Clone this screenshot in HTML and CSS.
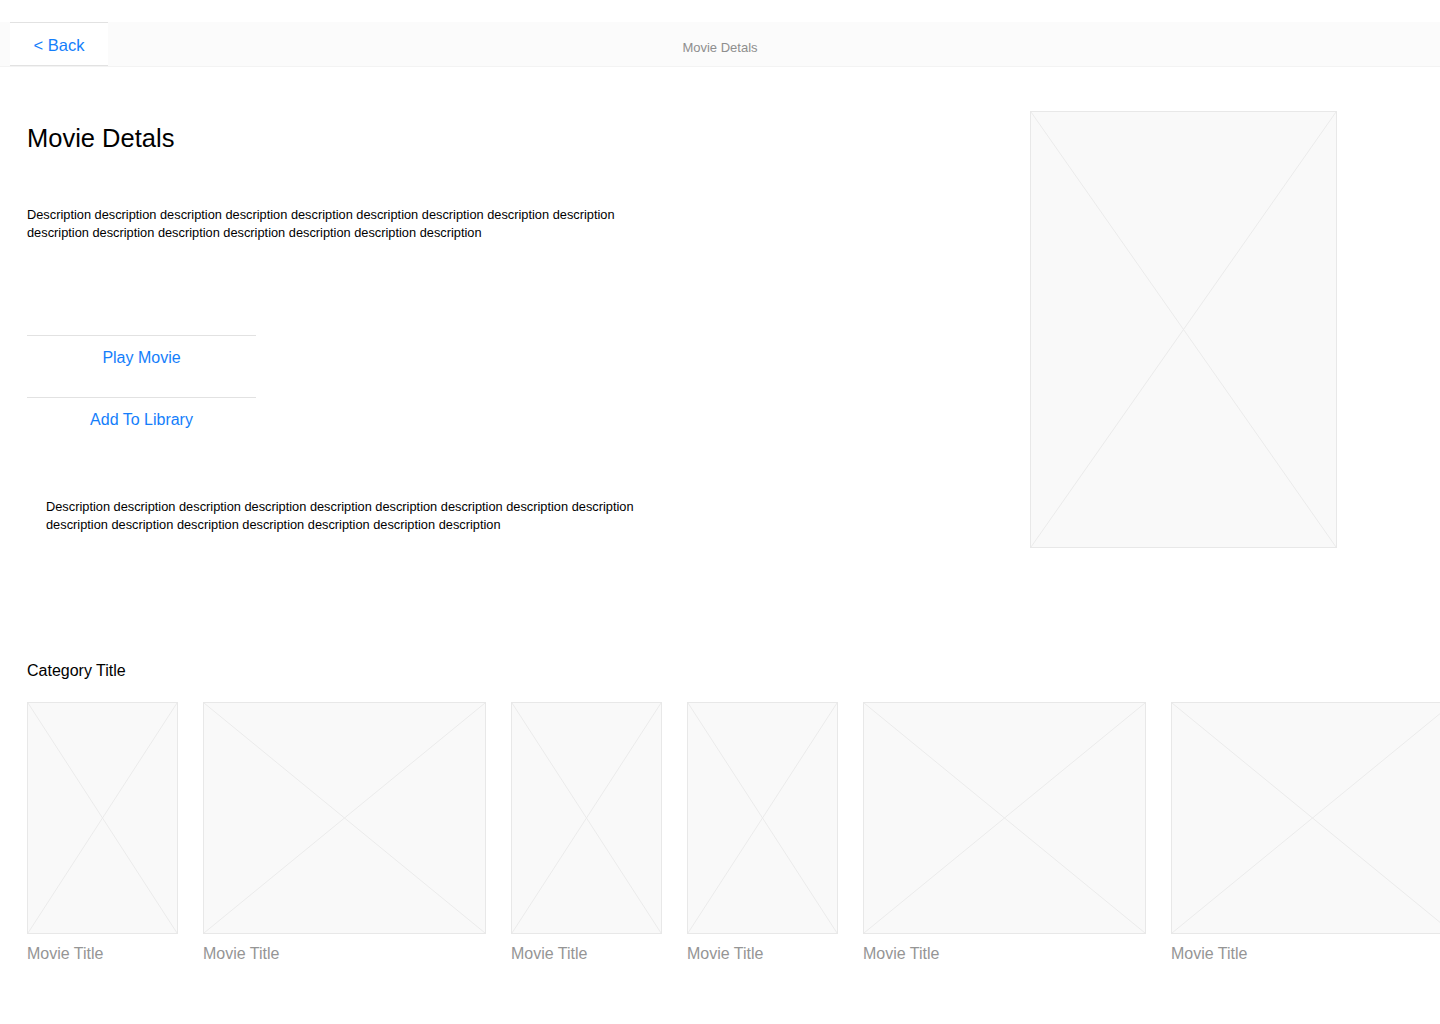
FILE: index.html
```html
<!DOCTYPE html>
<html lang="en">
<head>
    <meta charset="UTF-8">
    <meta name="viewport" content="width=device-width, initial-scale=1.0">
    <title>Movie Detals</title>
    <link rel="stylesheet" href="styles.css">
</head>
<body>

<div class="navbar">
    <a href="#" class="back">&lt; Back</a>
    <div class="nav-title">Movie Detals</div>
</div>

<div class="details">
    <div class="info">
        <h1>Movie Detals</h1>
        <p class="description">Description description description description description description description description description description description description description description description description</p>

        <div class="actions">
            <a href="#" class="action">Play Movie</a>
            <a href="#" class="action">Add To Library</a>
        </div>

        <p class="description indented">Description description description description description description description description description description description description description description description description</p>
    </div>

    <div class="placeholder poster">
        <svg viewBox="0 0 100 100" preserveAspectRatio="none"><line x1="0" y1="0" x2="100" y2="100"/><line x1="100" y1="0" x2="0" y2="100"/></svg>
    </div>
</div>

<div class="category">
    <h2>Category Title</h2>
    <div class="row">
        <div class="card">
            <div class="placeholder thumb">
                <svg viewBox="0 0 100 100" preserveAspectRatio="none"><line x1="0" y1="0" x2="100" y2="100"/><line x1="100" y1="0" x2="0" y2="100"/></svg>
            </div>
            <div class="card-title">Movie Title</div>
        </div>
        <div class="card">
            <div class="placeholder thumb wide">
                <svg viewBox="0 0 100 100" preserveAspectRatio="none"><line x1="0" y1="0" x2="100" y2="100"/><line x1="100" y1="0" x2="0" y2="100"/></svg>
            </div>
            <div class="card-title">Movie Title</div>
        </div>
        <div class="card">
            <div class="placeholder thumb">
                <svg viewBox="0 0 100 100" preserveAspectRatio="none"><line x1="0" y1="0" x2="100" y2="100"/><line x1="100" y1="0" x2="0" y2="100"/></svg>
            </div>
            <div class="card-title">Movie Title</div>
        </div>
        <div class="card">
            <div class="placeholder thumb">
                <svg viewBox="0 0 100 100" preserveAspectRatio="none"><line x1="0" y1="0" x2="100" y2="100"/><line x1="100" y1="0" x2="0" y2="100"/></svg>
            </div>
            <div class="card-title">Movie Title</div>
        </div>
        <div class="card">
            <div class="placeholder thumb wide">
                <svg viewBox="0 0 100 100" preserveAspectRatio="none"><line x1="0" y1="0" x2="100" y2="100"/><line x1="100" y1="0" x2="0" y2="100"/></svg>
            </div>
            <div class="card-title">Movie Title</div>
        </div>
        <div class="card">
            <div class="placeholder thumb wide">
                <svg viewBox="0 0 100 100" preserveAspectRatio="none"><line x1="0" y1="0" x2="100" y2="100"/><line x1="100" y1="0" x2="0" y2="100"/></svg>
            </div>
            <div class="card-title">Movie Title</div>
        </div>
    </div>
</div>

</body>
</html>
```

FILE: styles.css
```css
* {
    margin: 0;
    padding: 0;
    box-sizing: border-box;
}

body {
    font-family: 'Liberation Sans', Arial, Helvetica, sans-serif;
    background-color: #fff;
    color: #000;
    padding-top: 22px;
    overflow-x: hidden;
}

a {
    text-decoration: none;
    color: #147efb;
}

/* top bar */
.navbar {
    position: relative;
    height: 45px;
    padding-left: 10px;
    background-color: #fbfbfb;
    border-bottom: 1px solid #f3f3f3;
    display: flex;
    align-items: flex-start;
}

.back {
    width: 98px;
    height: 44px;
    padding-top: 2px;
    background-color: #fff;
    border-top: 1px solid #e2e2e2;
    border-bottom: 1px solid #e2e2e2;
    font-size: 16.5px;
    line-height: 20px;
    display: flex;
    align-items: center;
    justify-content: center;
}

.nav-title {
    position: absolute;
    left: 0;
    right: 0;
    top: 18px;
    text-align: center;
    font-size: 13px;
    line-height: 16px;
    color: #8e8e8e;
    pointer-events: none;
}

/* details */
.details {
    display: flex;
    justify-content: space-between;
    align-items: flex-start;
    padding: 44px 103px 0 27px;
}

.info {
    width: 640px;
}

h1 {
    margin-top: 12px;
    font-size: 25.5px;
    line-height: 30px;
    font-weight: normal;
}

.description {
    font-size: 12.8px;
    line-height: 18px;
    max-width: 620px;
}

h1 + .description {
    margin-top: 53px;
}

.description.indented {
    margin-top: 39px;
    padding-left: 19px;
}

.actions {
    width: 229px;
    margin-top: 93px;
}

.action {
    display: block;
    border-top: 1px solid #e2e2e2;
    padding: 12px 0 29px;
    text-align: center;
    font-size: 16px;
    line-height: 20px;
}

/* image placeholders */
.placeholder {
    flex: none;
    background-color: #f9f9f9;
    border: 1px solid #e8e8e8;
}

.placeholder svg {
    display: block;
    width: 100%;
    height: 100%;
}

.placeholder line {
    stroke: #ebebeb;
    stroke-width: 1;
    vector-effect: non-scaling-stroke;
}

.poster {
    width: 307px;
    height: 437px;
}

/* category */
.category {
    margin-top: 113px;
    padding-left: 27px;
}

h2 {
    font-size: 16px;
    line-height: 20px;
    font-weight: normal;
}

.row {
    display: flex;
    gap: 25px;
    margin-top: 21px;
    overflow: hidden;
}

.card {
    flex: none;
}

.thumb {
    width: 151px;
    height: 232px;
}

.thumb.wide {
    width: 283px;
}

.card-title {
    margin-top: 10px;
    font-size: 16px;
    line-height: 20px;
    color: #959595;
}
```
